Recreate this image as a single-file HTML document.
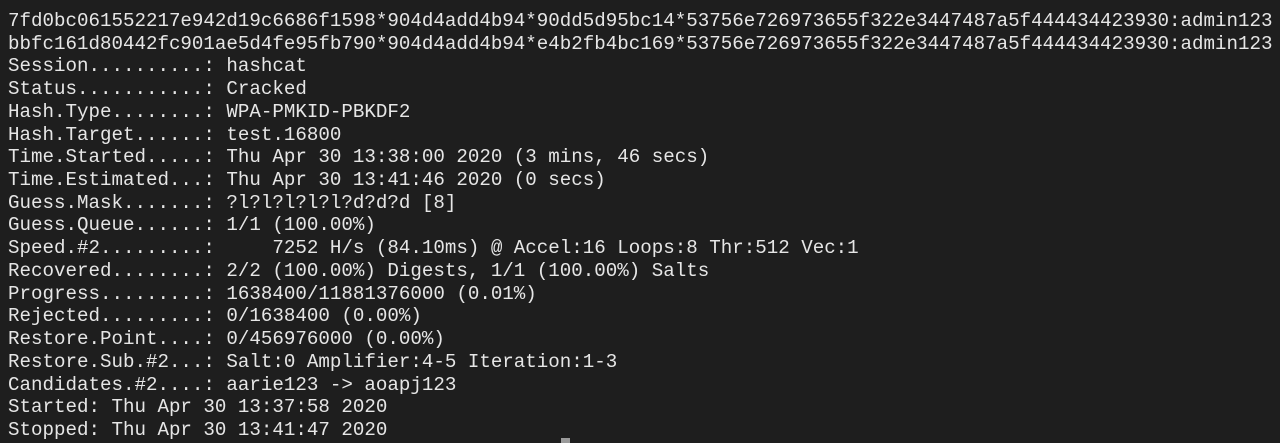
<!DOCTYPE html>
<html><head><style>
html,body{margin:0;padding:0;background:#1e1e1e;width:1280px;height:443px;overflow:hidden}
pre{margin:0;position:absolute;left:8px;top:10px;font-family:"Liberation Mono",monospace;font-size:19.17px;line-height:22.72px;color:#e6e6e6;white-space:pre}
.c{position:absolute;left:561px;top:438px;width:9px;height:5px;background:#9a9a9a}
</style></head><body>
<pre>7fd0bc061552217e942d19c6686f1598*904d4add4b94*90dd5d95bc14*53756e726973655f322e3447487a5f444434423930:admin123
bbfc161d80442fc901ae5d4fe95fb790*904d4add4b94*e4b2fb4bc169*53756e726973655f322e3447487a5f444434423930:admin123
Session..........: hashcat
Status...........: Cracked
Hash.Type........: WPA-PMKID-PBKDF2
Hash.Target......: test.16800
Time.Started.....: Thu Apr 30 13:38:00 2020 (3 mins, 46 secs)
Time.Estimated...: Thu Apr 30 13:41:46 2020 (0 secs)
Guess.Mask.......: ?l?l?l?l?l?d?d?d [8]
Guess.Queue......: 1/1 (100.00%)
Speed.#2.........:     7252 H/s (84.10ms) @ Accel:16 Loops:8 Thr:512 Vec:1
Recovered........: 2/2 (100.00%) Digests, 1/1 (100.00%) Salts
Progress.........: 1638400/11881376000 (0.01%)
Rejected.........: 0/1638400 (0.00%)
Restore.Point....: 0/456976000 (0.00%)
Restore.Sub.#2...: Salt:0 Amplifier:4-5 Iteration:1-3
Candidates.#2....: aarie123 -&gt; aoapj123
Started: Thu Apr 30 13:37:58 2020
Stopped: Thu Apr 30 13:41:47 2020</pre>
<div class="c"></div>
</body></html>
